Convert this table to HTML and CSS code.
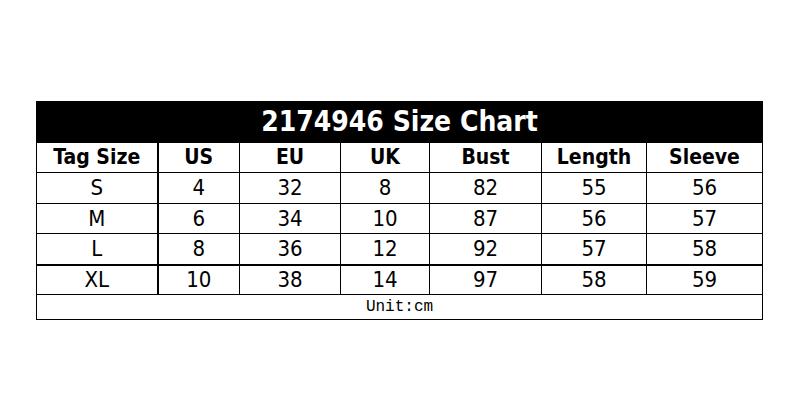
FILE: index.html
```html
<!DOCTYPE html>
<html>
<head>
<meta charset="utf-8">
<link rel="stylesheet" href="styles.css">
</head>
<body>
<div class="page">
<table class="chart">
<colgroup>
<col class="c1"><col class="c2"><col class="c3"><col class="c4"><col class="c5"><col class="c6"><col class="c7">
</colgroup>
<tr class="title"><td colspan="7">2174946 Size Chart</td></tr>
<tr class="head"><td class="first">Tag Size</td><td>US</td><td>EU</td><td>UK</td><td>Bust</td><td>Length</td><td>Sleeve</td></tr>
<tr class="r1"><td class="first">S</td><td>4</td><td>32</td><td>8</td><td>82</td><td>55</td><td>56</td></tr>
<tr class="r2"><td class="first">M</td><td>6</td><td>34</td><td>10</td><td>87</td><td>56</td><td>57</td></tr>
<tr class="r3"><td class="first">L</td><td>8</td><td>36</td><td>12</td><td>92</td><td>57</td><td>58</td></tr>
<tr class="r4"><td class="first">XL</td><td>10</td><td>38</td><td>14</td><td>97</td><td>58</td><td>59</td></tr>
<tr class="unit"><td colspan="7">Unit:cm</td></tr>
</table>
</div>
</body>
</html>
```
FILE: styles.css
```css
html, body {
  margin: 0;
  padding: 0;
  background: #fff;
}
.page {
  padding: 101px 0 0 36px;
}
.chart {
  border-collapse: collapse;
  table-layout: fixed;
  width: 727px;
  font-family: "DejaVu Sans Condensed", "DejaVu Sans", sans-serif;
  font-stretch: condensed;
  color: #000;
}
.c1 { width: 121px; }
.c2 { width: 82px; }
.c3 { width: 101px; }
.c4 { width: 89px; }
.c5 { width: 112px; }
.c6 { width: 105px; }
.c7 { width: 116px; }
.chart td {
  border: 1px solid #000;
  padding: 0;
  text-align: center;
  vertical-align: middle;
  font-size: 22px;
  line-height: 1;
}
.chart td.first {
  border-right: 2px solid #000;
}
.title td {
  background: #000;
  color: #fff;
  font-weight: bold;
  font-size: 28px;
  height: 40px;
}
.head td {
  font-weight: bold;
  font-size: 21px;
  height: 29px;
}
.r1 td, .r3 td { height: 30px; }
.r2 td { height: 29px; }
.r4 td {
  height: 28px;
  border-top: 2px solid #000;
}
.unit td {
  font-family: "Liberation Mono", monospace;
  font-size: 16px;
  height: 24px;
}
```
